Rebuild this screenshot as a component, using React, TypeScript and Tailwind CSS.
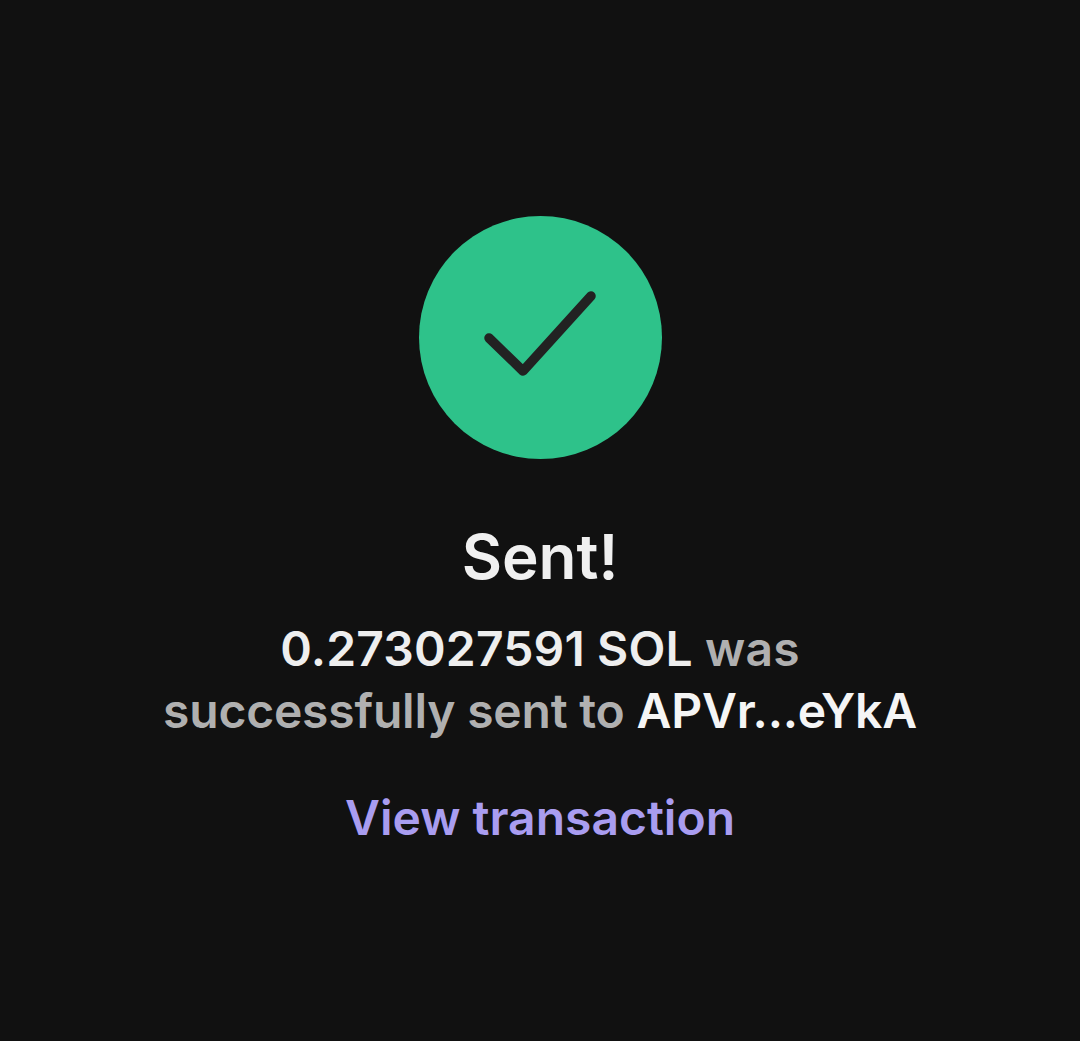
export default function App() {
  return (
    <div className="w-[1080px] h-[1041px] bg-[#111111] flex flex-col items-center pt-[216px] font-['Inter',sans-serif]">
      <div className="w-[243px] h-[243px] rounded-full bg-[#2ec28a] flex items-center justify-center">
        <svg width="243" height="243" viewBox="0 0 243 243" fill="none">
          <path d="M70 122 L104 155 L172 80" stroke="#222222" strokeWidth="9.5" strokeLinecap="round" strokeLinejoin="round" />
        </svg>
      </div>
      <h1 className="mt-[60px] text-[62px] leading-[76px] font-semibold text-[#f0f0f0]">Sent!</h1>
      <p className="mt-[23px] text-[48px] leading-[62px] font-semibold text-center text-[#b0b0b0]">
        <span className="tracking-[0.15px]">
          <span className="text-[#eeeeee]">0.273027591 SOL</span> was
        </span>
        <br />
        <span className="tracking-[-0.2px]">
          successfully sent to <span className="text-[#f5f5f5]">APVr...eYkA</span>
        </span>
      </p>
      <a className="mt-[46px] text-[48px] leading-[60px] font-semibold text-[#a99df0]">View transaction</a>
    </div>
  );
}
